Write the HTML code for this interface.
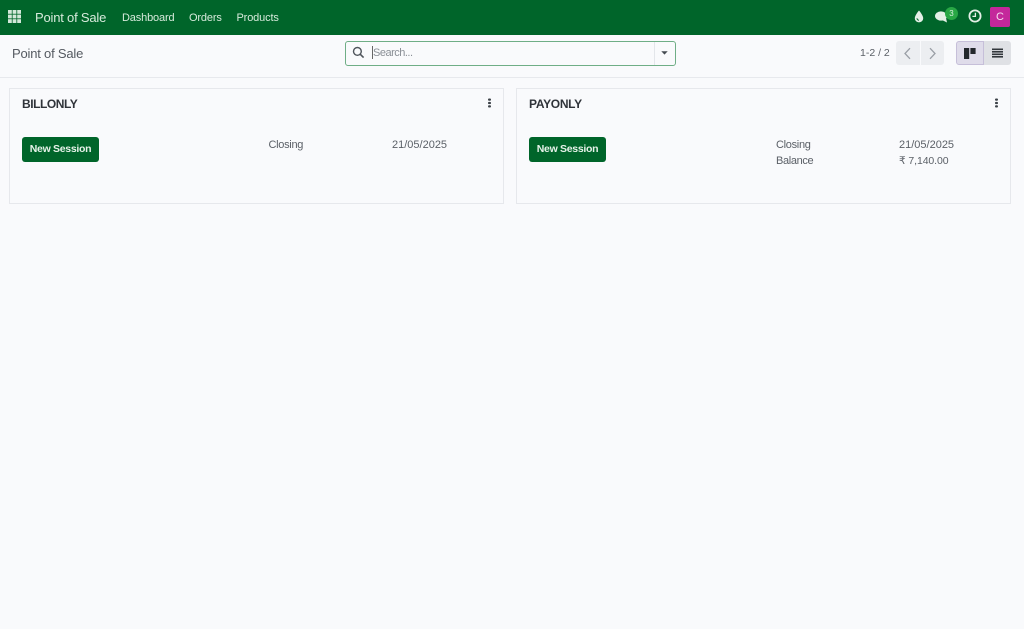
<!DOCTYPE html>
<html lang="en">
<head>
<meta charset="utf-8">
<title>Point of Sale</title>
<style>
*{box-sizing:border-box}
html,body{margin:0;padding:0;width:1024px;height:629px;overflow:hidden;background:#f9fafc;font-family:"Liberation Sans",sans-serif;color:#4a4f55}
.a{position:absolute;white-space:nowrap;line-height:1}
#nav{position:absolute;left:0;top:0;width:1024px;height:35px;background:#00652a}
#cp{position:absolute;left:0;top:35px;width:1024px;height:43px;background:#f9fafc;border-bottom:1px solid #e7e9ed}
.n{color:#d6eadb;font-size:11px;top:12.5px;letter-spacing:-.15px}
.card{position:absolute;top:88px;width:495px;height:116px;border:1px solid #e6e8ec;background:#f9fafc}
.btn{position:absolute;top:137px;width:77px;height:25px;background:#00652a;border-radius:3px;color:#e6f2e9;font-size:10.5px;font-weight:bold;line-height:24px;text-align:center;letter-spacing:-.3px}
.t{font-size:12px;font-weight:bold;color:#2f3339;top:98px;letter-spacing:-.45px}
.v{font-size:11px;color:#5b6067}
</style>
</head>
<body>
<div id="nav"></div>
<svg class="a" style="left:8px;top:10px" width="13" height="13" viewBox="0 0 13 13"><g fill="#d3e8da"><rect x="0" y="0" width="3.8" height="3.8"/><rect x="4.6" y="0" width="3.8" height="3.8"/><rect x="9.2" y="0" width="3.8" height="3.8"/><rect x="0" y="4.6" width="3.8" height="3.8"/><rect x="4.6" y="4.6" width="3.8" height="3.8"/><rect x="9.2" y="4.6" width="3.8" height="3.8"/><rect x="0" y="9.2" width="3.8" height="3.8"/><rect x="4.6" y="9.2" width="3.8" height="3.8"/><rect x="9.2" y="9.2" width="3.8" height="3.8"/></g></svg>
<div class="a" style="left:35px;top:11px;color:#d6eadb;font-size:13px;letter-spacing:-.2px">Point of Sale</div>
<div class="a n" style="left:122px">Dashboard</div>
<div class="a n" style="left:189px">Orders</div>
<div class="a n" style="left:236.5px">Products</div>

<svg class="a" style="left:913px;top:10px" width="12" height="13" viewBox="0 0 12 13"><path d="M6 0.5C6 0.5 1.8 5.2 1.8 8.2a4.2 4.2 0 0 0 8.4 0C10.2 5.2 6 0.5 6 0.5Z" fill="#e4f0e7"/><path d="M4 8.2a2 2 0 0 0 2 2" stroke="#00652a" stroke-width="1" fill="none"/></svg>
<svg class="a" style="left:935px;top:10px" width="14" height="13" viewBox="0 0 14 13"><ellipse cx="6" cy="6" rx="6" ry="4.6" fill="#e4f0e7"/><path d="M7 10 L12 12.5 L11 8Z" fill="#e4f0e7"/></svg>
<div class="a" style="left:945px;top:7px;width:13px;height:13px;border-radius:7px;background:#28a745;color:#d9efdf;font-size:8px;line-height:13px;text-align:center">3</div>
<svg class="a" style="left:968px;top:9px" width="14" height="14" viewBox="0 0 14 14"><circle cx="7" cy="7" r="5.6" fill="none" stroke="#e4f0e7" stroke-width="1.8"/><path d="M7.4 3.8V7.4H4.4" fill="none" stroke="#e4f0e7" stroke-width="1.3"/></svg>
<div class="a" style="left:990px;top:7px;width:20px;height:20px;border-radius:2px;background:#c4279b;color:#f4dcee;font-size:11px;line-height:20px;text-align:center">C</div>

<div id="cp"></div>
<div class="a" style="left:12px;top:47px;font-size:13px;color:#555a61;letter-spacing:-.2px">Point of Sale</div>

<div class="a" style="left:345px;top:41px;width:331px;height:25px;border:1px solid #6fae86;border-radius:3px;background:#f9fafc"></div>
<div class="a" style="left:654px;top:42px;width:1px;height:23px;background:#e3e6ea"></div>
<svg class="a" style="left:352px;top:46px" width="13" height="13" viewBox="0 0 13 13"><circle cx="5.4" cy="5.4" r="3.9" fill="none" stroke="#4f555c" stroke-width="1.4"/><path d="M8.3 8.3L11.6 11.6" stroke="#4f555c" stroke-width="1.6"/></svg>
<div class="a" style="left:372px;top:46px;width:1px;height:13px;background:#666"></div>
<div class="a" style="left:373px;top:47.5px;font-size:11px;color:#8a8f96;letter-spacing:-.5px">Search...</div>
<svg class="a" style="left:661px;top:51px" width="7" height="4" viewBox="0 0 8 5"><path d="M0 0.3H8L4 4.6Z" fill="#444a50"/></svg>

<div class="a" style="left:860px;top:48px;font-size:10.5px;color:#5b6067">1-2 / 2</div>
<div class="a" style="left:896px;top:41px;width:24px;height:24px;background:#eceef1;border-radius:3px 0 0 3px"></div>
<div class="a" style="left:921px;top:41px;width:23px;height:24px;background:#eceef1;border-radius:0 3px 3px 0"></div>
<svg class="a" style="left:903px;top:47px" width="9" height="13" viewBox="0 0 9 13"><path d="M7 1.2L2 6.5L7 11.8" fill="none" stroke="#9a9fa6" stroke-width="1.3"/></svg>
<svg class="a" style="left:928px;top:47px" width="9" height="13" viewBox="0 0 9 13"><path d="M2 1.2L7 6.5L2 11.8" fill="none" stroke="#9a9fa6" stroke-width="1.3"/></svg>

<div class="a" style="left:956px;top:41px;width:28px;height:24px;background:#dfdcea;border:1px solid #c6bfd9;border-radius:3px 0 0 3px"></div>
<div class="a" style="left:984px;top:41px;width:27px;height:24px;background:#dfe1e5;border-radius:0 3px 3px 0"></div>
<svg class="a" style="left:964px;top:48px" width="12" height="11" viewBox="0 0 12 11"><rect x="0" y="0" width="5.2" height="11" fill="#23272c"/><rect x="6.4" y="0" width="5.2" height="6" fill="#23272c"/></svg>
<svg class="a" style="left:992px;top:48px" width="11" height="10" viewBox="0 0 11 10"><g fill="#33383d"><rect y="0.5" width="11" height="1.6"/><rect y="3" width="11" height="1.6"/><rect y="5.5" width="11" height="1.6"/><rect y="8" width="11" height="1.6"/></g></svg>

<div class="card" style="left:9px"></div>
<div class="card" style="left:516px"></div>

<div class="a t" style="left:22px">BILLONLY</div>
<div class="a t" style="left:529px;letter-spacing:-.3px">PAYONLY</div>

<svg class="a" style="left:488px;top:98px" width="3" height="10" viewBox="0 0 3 10"><g fill="#3d4248"><rect x="0" y="0.5" width="3" height="2.2" rx="1"/><rect x="0" y="3.9" width="3" height="2.2" rx="1"/><rect x="0" y="7.3" width="3" height="2.2" rx="1"/></g></svg>
<svg class="a" style="left:995px;top:98px" width="3" height="10" viewBox="0 0 3 10"><g fill="#3d4248"><rect x="0" y="0.5" width="3" height="2.2" rx="1"/><rect x="0" y="3.9" width="3" height="2.2" rx="1"/><rect x="0" y="7.3" width="3" height="2.2" rx="1"/></g></svg>

<div class="btn" style="left:22px">New Session</div>
<div class="btn" style="left:529px">New Session</div>

<div class="a v" style="left:268.5px;top:139.5px;letter-spacing:-.3px">Closing</div>
<div class="a v" style="left:392px;top:139.5px">21/05/2025</div>
<div class="a v" style="left:776px;top:139.5px;letter-spacing:-.3px">Closing</div>
<div class="a v" style="left:899px;top:139.5px">21/05/2025</div>
<div class="a v" style="left:776px;top:155.5px;letter-spacing:-.35px">Balance</div>
<div class="a v" style="left:899px;top:155.5px;font-size:10.5px;letter-spacing:-.1px;font-family:'Liberation Sans','DejaVu Sans',sans-serif">₹ 7,140.00</div>
</body>
</html>
